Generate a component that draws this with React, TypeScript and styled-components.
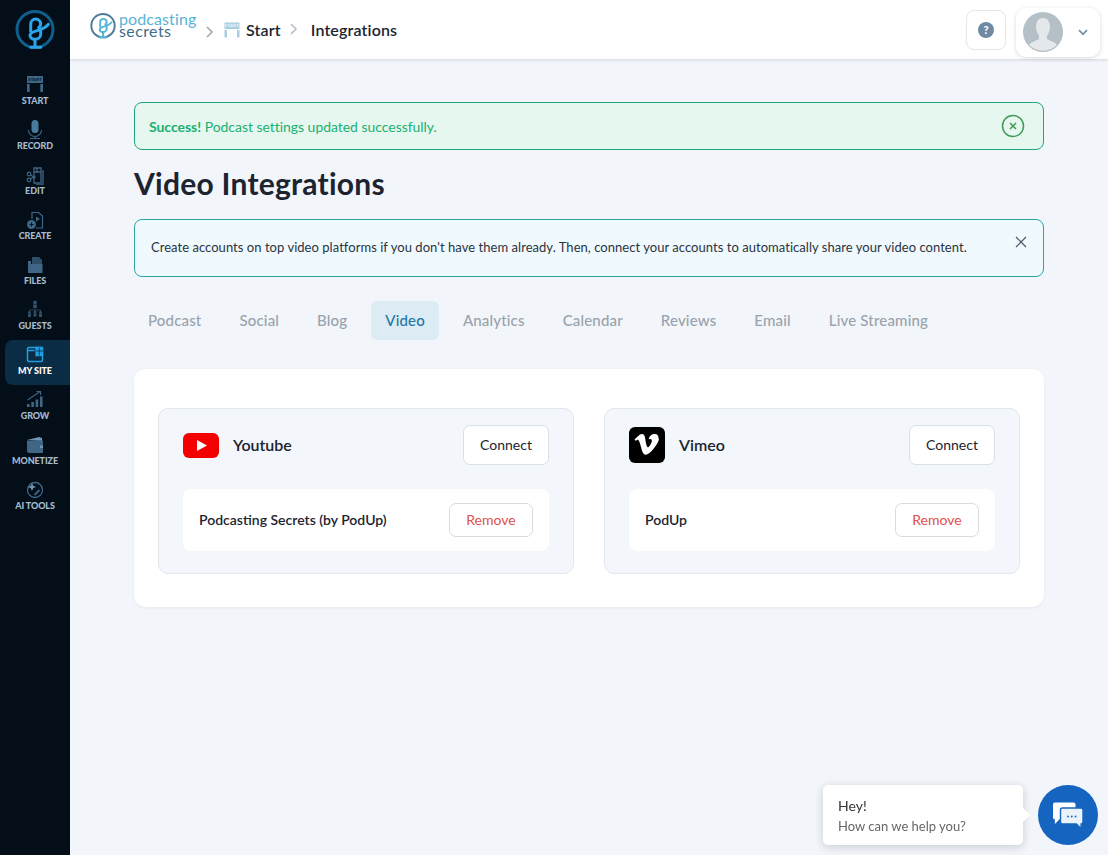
import React from "react";
import styled, { createGlobalStyle } from "styled-components";

const GlobalStyle = createGlobalStyle`
  html, body {
    margin: 0;
    padding: 0;
    height: 100%;
    background: #f2f5f9;
    font-family: "Lato", "Noto Sans", sans-serif;
    color: #1b2430;
  }
  * {
    box-sizing: border-box;
  }
`;

const Shell = styled.div`
  display: flex;
  height: 855px;
  overflow: hidden;
`;

const Sidebar = styled.aside`
  width: 70px;
  flex: none;
  background: #030e18;
  display: flex;
  flex-direction: column;
`;

const SideLogo = styled.div`
  height: 70px;
  padding-top: 10px;
  display: flex;
  justify-content: center;
`;

const NavItem = styled.div<{ $active?: boolean }>`
  height: 45px;
  margin-left: 5px;
  padding: 5px 5px 0 0;
  display: flex;
  flex-direction: column;
  align-items: center;
  border-radius: 8px 0 0 8px;
  background: ${(p) => (p.$active ? "#0b2c45" : "transparent")};
  color: ${(p) => (p.$active ? "#1f9fe0" : "#3f6684")};
`;

const NavIcon = styled.svg`
  width: 20px;
  height: 20px;
  display: block;
`;

const NavLabel = styled.span<{ $active?: boolean }>`
  font-family: "Lato", sans-serif;
  font-size: 9px;
  line-height: 11px;
  font-weight: 900;
  white-space: nowrap;
  letter-spacing: -0.1px;
  color: ${(p) => (p.$active ? "#ffffff" : "#a5bccd")};
`;

const Main = styled.div`
  flex: 1;
  display: flex;
  flex-direction: column;
  min-width: 0;
`;

const Header = styled.header`
  height: 59px;
  flex: none;
  background: #ffffff;
  box-shadow: 0 1px 3px rgba(30, 50, 80, 0.14);
  display: flex;
  align-items: center;
  padding: 0 8px 0 20px;
`;

const Brand = styled.div`
  display: flex;
  align-items: center;
  gap: 3px;
  margin-bottom: 7px;
`;

const Crumbs = styled.nav`
  display: flex;
  align-items: center;
  margin-left: 9px;
  font-size: 16px;
  font-weight: 600;
  letter-spacing: 0.15px;
  color: #1b2430;
`;

const CrumbChevron = styled.svg<{ $dy: number; $gapLeft: number; $gapRight: number }>`
  width: 8px;
  height: 12px;
  margin: 0 ${(p) => p.$gapRight}px 0 ${(p) => p.$gapLeft}px;
  transform: translateY(${(p) => p.$dy}px);
`;

const CrumbIcon = styled.svg`
  width: 16px;
  height: 16px;
  margin-right: 6px;
`;

const Spacer = styled.div`
  flex: 1;
`;

const HelpButton = styled.button`
  width: 40px;
  height: 40px;
  border: 1px solid #e2e7ed;
  border-radius: 8px;
  background: #fff;
  display: flex;
  align-items: center;
  justify-content: center;
  padding: 0;
`;

const ProfileButton = styled.div`
  width: 84px;
  height: 49px;
  margin-left: 10px;
  margin-top: 5px;
  border-radius: 10px;
  background: #fff;
  box-shadow: 0 1px 4px rgba(30, 50, 80, 0.18);
  display: flex;
  align-items: center;
  padding-left: 7px;
  gap: 15px;
`;

const Content = styled.main`
  flex: 1;
  padding: 43px 64px 0;
  display: flex;
  flex-direction: column;
`;

const SuccessAlert = styled.div`
  height: 48px;
  border: 1px solid #22a57c;
  border-radius: 8px;
  background: #e6f7f0;
  color: #1cb072;
  font-size: 14px;
  letter-spacing: -0.04px;
  display: flex;
  align-items: center;
  justify-content: space-between;
  padding: 0 18px 0 14px;
  b {
    font-weight: 700;
  }
`;

const Title = styled.h1`
  margin: 13px 0 16px;
  font-size: 30px;
  line-height: 40px;
  font-weight: 700;
  letter-spacing: 0.25px;
  color: #1b2430;
`;

const InfoAlert = styled.div`
  height: 58px;
  border: 1px solid #2aa5a5;
  border-radius: 8px;
  background: #f0f9fd;
  font-size: 13px;
  letter-spacing: 0.04px;
  color: #2a3440;
  display: flex;
  align-items: center;
  justify-content: space-between;
  padding: 0 16px;
`;

const InfoText = styled.span`
  margin-bottom: 2px;
`;

const InfoClose = styled.svg`
  width: 12px;
  height: 12px;
  margin-bottom: 12px;
`;

const Tabs = styled.div`
  display: flex;
  margin-top: 24px;
`;

const Tab = styled.div<{ $active?: boolean }>`
  height: 39px;
  padding: 0 14px 2px;
  margin-right: 10px;
  display: flex;
  align-items: center;
  font-size: 15px;
  letter-spacing: 0.17px;
  border-radius: 6px;
  font-weight: 500;
  color: ${(p) => (p.$active ? "#1f78a8" : "#98a3ad")};
  background: ${(p) => (p.$active ? "#dcebf4" : "transparent")};
`;

const Panel = styled.section`
  margin-top: 29px;
  height: 238px;
  background: #fff;
  border-radius: 12px;
  box-shadow: 0 1px 3px rgba(30, 50, 80, 0.06);
  padding: 39px 24px 0;
  display: grid;
  grid-template-columns: 416px 416px;
  column-gap: 30px;
  align-items: start;
`;

const IntegrationCard = styled.div`
  height: 166px;
  background: #f3f6fa;
  border: 1px solid #e1e7ed;
  border-radius: 10px;
  padding: 16px 24px 0;
`;

const CardHead = styled.div`
  display: flex;
  align-items: center;
  height: 40px;
`;

const CardName = styled.span`
  margin: 0 0 2px 14px;
  font-size: 16px;
  font-weight: 600;
  flex: 1;
`;

const ConnectButton = styled.button`
  width: 86px;
  height: 40px;
  background: #fff;
  border: 1px solid #d9dfe6;
  border-radius: 7px;
  font: inherit;
  font-size: 14px;
  color: #1b2430;
  padding: 0 0 2px;
`;

const AccountRow = styled.div`
  margin-top: 24px;
  height: 62px;
  background: #fff;
  border-radius: 8px;
  display: flex;
  align-items: center;
  justify-content: space-between;
  padding: 0 16px;
  font-size: 14px;
  font-weight: 600;
`;

const AccountName = styled.span`
  margin-bottom: 2px;
`;

const RemoveButton = styled.button`
  width: 84px;
  height: 34px;
  background: #fff;
  border: 1px solid #d5dce2;
  border-radius: 7px;
  font: inherit;
  font-size: 14px;
  font-weight: 400;
  color: #e0504a;
  padding: 0 0 2px;
`;

const ChatWidget = styled.div`
  position: fixed;
  right: 10px;
  bottom: 10px;
  display: flex;
  align-items: center;
  gap: 15px;
`;

const ChatBubble = styled.div`
  position: relative;
  width: 200px;
  height: 60px;
  background: #fff;
  border-radius: 5px;
  box-shadow: 0 2px 8px rgba(30, 50, 80, 0.2);
  padding: 12px 15px;
  &::after {
    content: "";
    position: absolute;
    right: -5px;
    top: 25px;
    width: 10px;
    height: 10px;
    background: #fff;
    transform: rotate(45deg);
  }
`;

const ChatHey = styled.div`
  font-size: 14px;
  line-height: 18px;
  color: #333;
`;

const ChatHelp = styled.div`
  font-size: 13px;
  line-height: 22px;
  color: #666;
`;

const ChatButton = styled.div`
  width: 60px;
  height: 60px;
  border-radius: 50%;
  background: #1565c0;
  display: flex;
  align-items: center;
  justify-content: center;
`;

const LogoMark: React.FC<{ size: number; ring: string; stroke: string; weight: number }> = ({
  size,
  ring,
  stroke,
  weight,
}) => (
  <svg width={size} height={size} viewBox="0 0 40 40" fill="none">
    <circle cx="20" cy="19.5" r="18" stroke={ring} strokeWidth={weight} />
    <g stroke={stroke} strokeWidth={weight} strokeLinecap="round" strokeLinejoin="round">
      <path d="M15.7 21V14a5 5 0 0 1 10 0c0 1.5-.8 2.7-2 3.5" />
      <path d="M33.3 14.3c-2 3-6 4.5-10 6-4 1.3-8.3 2-8.3 5 0 2.5 2.5 4 5 4s5.7-1.5 5.7-5v-2.5" />
      <path d="M20 29.5V37M15.7 37.3h10" />
    </g>
  </svg>
);

const navItems: { label: string; icon: React.ReactNode; active?: boolean }[] = [
  {
    label: "START",
    icon: (
      <>
        <rect x="2" y="1" width="16" height="7" fill="currentColor" />
        <text x="10" y="6.2" textAnchor="middle" fontSize="4.5" fontWeight="900" fill="#0a1c2b" fontFamily="Lato, sans-serif">
          START
        </text>
        <rect x="2" y="9" width="2.7" height="8" fill="currentColor" />
        <rect x="15.3" y="9" width="2.7" height="8" fill="currentColor" />
      </>
    ),
  },
  {
    label: "RECORD",
    icon: (
      <>
        <rect x="6.5" y="0" width="7" height="13" rx="3.5" fill="#4a7a9c" />
        <path d="M3.5 10a6.5 6.5 0 0 0 13 0M10 16.5V18.5M5 18.5h10" stroke="currentColor" strokeWidth="1.1" fill="none" />
      </>
    ),
  },
  {
    label: "EDIT",
    icon: (
      <>
        <path d="M9 3h7v15H9V3zM9 7h7M12 3v4M18 5v15h-7" stroke="currentColor" strokeWidth="1.3" fill="none" />
        <circle cx="4" cy="9" r="1.8" stroke="currentColor" strokeWidth="1.2" fill="none" />
        <circle cx="4" cy="15" r="1.8" stroke="currentColor" strokeWidth="1.2" fill="none" />
        <path d="M5.5 10l5 3M5.5 14l5-3" stroke="currentColor" strokeWidth="1.2" />
      </>
    ),
  },
  {
    label: "CREATE",
    icon: (
      <>
        <path d="M7 9V2.5h6.5L17.5 6v12H11" stroke="currentColor" strokeWidth="1.2" fill="none" />
        <circle cx="6.5" cy="14.5" r="4.5" fill="currentColor" />
        <path d="M6.5 12.5v4M4.5 14.5h4" stroke="#030e18" strokeWidth="1" />
        <path d="M11 6.5l4 2.5-4 2.5z" fill="currentColor" />
      </>
    ),
  },
  {
    label: "FILES",
    icon: (
      <>
        <path d="M7 2h7l3 3v4H7z" fill="#2e4e68" />
        <path d="M3 6h3v3h11.5V18H3z" fill="currentColor" />
      </>
    ),
  },
  {
    label: "GUESTS",
    icon: (
      <g opacity="0.75">
        <circle cx="10" cy="2.5" r="2" fill="currentColor" />
        <rect x="8" y="4.5" width="4" height="3.5" rx="1" fill="currentColor" />
        <path d="M10 8v2M4.5 12v-2h11v2" stroke="currentColor" strokeWidth="0.8" fill="none" />
        <circle cx="4.5" cy="12.5" r="1.5" fill="currentColor" />
        <circle cx="10" cy="12" r="1.5" fill="currentColor" />
        <circle cx="15.5" cy="12.5" r="1.5" fill="currentColor" />
        <rect x="3" y="14" width="3" height="3" fill="currentColor" />
        <rect x="8.5" y="13.5" width="3" height="3" fill="currentColor" />
        <rect x="14" y="14" width="3" height="3" fill="currentColor" />
      </g>
    ),
  },
  {
    label: "MY SITE",
    active: true,
    icon: (
      <>
        <rect x="2.5" y="2.5" width="15" height="14" rx="1.5" stroke="currentColor" strokeWidth="1.5" fill="none" />
        <path d="M2.5 5.5h7M11 2.5h6.5v8H11z" fill="currentColor" stroke="currentColor" strokeWidth="1.3" />
        <path d="M11 6h7M14.3 2.5v8" stroke="#0b2c45" strokeWidth="0.8" />
      </>
    ),
  },
  {
    label: "GROW",
    icon: (
      <>
        <path d="M2.5 10L14.5 2M11.5 1.5h4v3.5" stroke="currentColor" strokeWidth="1.1" fill="none" />
        <rect x="2" y="14" width="2.6" height="3" fill="currentColor" />
        <rect x="6.3" y="12" width="2.6" height="5" fill="currentColor" />
        <rect x="10.6" y="9.5" width="2.6" height="7.5" fill="currentColor" />
        <rect x="15" y="6.5" width="2.6" height="10.5" fill="currentColor" />
      </>
    ),
  },
  {
    label: "MONETIZE",
    icon: (
      <>
        <path d="M2 5l12-3 3 1v3z" fill="#6f95b0" />
        <path d="M2 5.5h16V18H4.5A2.5 2.5 0 0 1 2 15.5z" fill="currentColor" />
        <path d="M15 10.5h3V13h-3z" fill="#6f95b0" />
      </>
    ),
  },
  {
    label: "AI TOOLS",
    icon: (
      <>
        <circle cx="10" cy="10" r="7.5" stroke="currentColor" strokeWidth="1.3" fill="none" />
        <path d="M7 3l1.2 2.8L11 7 8.2 8.2 7 11 5.8 8.2 3 7l2.8-1.2z" fill="#6f95b0" />
        <path d="M9.5 15l5-5" stroke="currentColor" strokeWidth="1.8" />
      </>
    ),
  },
];

const tabs = ["Podcast", "Social", "Blog", "Video", "Analytics", "Calendar", "Reviews", "Email", "Live Streaming"];

const App: React.FC = () => (
  <Shell>
    <GlobalStyle />
    <Sidebar>
      <SideLogo>
        <LogoMark size={40} ring="#0f5f8c" stroke="#2aa5ea" weight={3} />
      </SideLogo>
      {navItems.map((item) => (
        <NavItem key={item.label} $active={item.active}>
          <NavIcon viewBox="0 0 20 20">{item.icon}</NavIcon>
          <NavLabel $active={item.active}>{item.label}</NavLabel>
        </NavItem>
      ))}
    </Sidebar>
    <Main>
      <Header>
        <Brand>
          <LogoMark size={26} ring="#4d7c9b" stroke="#58b4d6" weight={3} />
          <svg width="80" height="36" viewBox="0 0 80 36" fontFamily="Lato, sans-serif" fontSize="16">
            <text x="0" y="17" fill="#58b4d6" letterSpacing="0.1">
              podcasting
            </text>
            <text x="0" y="29" fill="#3f6d8c" letterSpacing="0.4">
              secrets
            </text>
          </svg>
        </Brand>
        <Crumbs>
          <CrumbChevron viewBox="0 0 8 12" fill="none" $dy={2} $gapLeft={-2} $gapRight={10}>
            <path d="M1 1l5 5-5 5" stroke="#9aa5ae" strokeWidth="1.5" />
          </CrumbChevron>
          <CrumbIcon viewBox="0 0 16 16">
            <rect x="0.5" y="0.5" width="15" height="6.5" fill="#a9cfe2" />
            <text x="8" y="5.3" textAnchor="middle" fontSize="4.5" fontWeight="900" fill="#e6f2f8" fontFamily="Lato, sans-serif">
              START
            </text>
            <rect x="0.5" y="8" width="2.5" height="7.5" fill="#a9cfe2" />
            <rect x="13" y="8" width="2.5" height="7.5" fill="#a9cfe2" />
          </CrumbIcon>
          <span>Start</span>
          <CrumbChevron viewBox="0 0 8 12" fill="none" $dy={-1} $gapLeft={9} $gapRight={13}>
            <path d="M1 1l5 5-5 5" stroke="#b4bdc5" strokeWidth="1.5" />
          </CrumbChevron>
          <span>Integrations</span>
        </Crumbs>
        <Spacer />
        <HelpButton>
          <svg width="16" height="16" viewBox="0 0 16 16">
            <circle cx="8" cy="8" r="8" fill="#6f8aa5" />
            <text x="8" y="12" textAnchor="middle" fontSize="11" fontWeight="900" fill="#fff" fontFamily="Lato, sans-serif">
              ?
            </text>
          </svg>
        </HelpButton>
        <ProfileButton>
          <svg width="40" height="40" viewBox="0 0 40 40">
            <circle cx="20" cy="20" r="20" fill="#b4bfc6" />
            <path
              d="M20 6c-5 0-7 4-7 9 0 4 2 7 3 9v3c-3 2-8 3-10 6a20 20 0 0 0 28 0c-2-3-7-4-10-6v-3c1-2 3-5 3-9 0-5-2-9-7-9z"
              fill="#e4e8ea"
            />
          </svg>
          <svg width="10" height="7" viewBox="0 0 10 7" fill="none">
            <path d="M1 1.2l4 4 4-4" stroke="#7d94a8" strokeWidth="1.8" />
          </svg>
        </ProfileButton>
      </Header>
      <Content>
        <SuccessAlert>
          <span>
            <b>Success!</b> Podcast settings updated successfully.
          </span>
          <svg width="24" height="24" viewBox="0 0 24 24" fill="none">
            <circle cx="12" cy="12" r="10.5" stroke="#3f9a55" strokeWidth="1.5" />
            <path d="M9 9l6 6M15 9l-6 6" stroke="#3f9a55" strokeWidth="1.5" />
          </svg>
        </SuccessAlert>
        <Title>Video Integrations</Title>
        <InfoAlert>
          <InfoText>
            Create accounts on top video platforms if you don't have them already. Then, connect your accounts to
            automatically share your video content.
          </InfoText>
          <InfoClose viewBox="0 0 12 12" fill="none">
            <path d="M1 1l10 10M11 1L1 11" stroke="#4a5866" strokeWidth="1.2" />
          </InfoClose>
        </InfoAlert>
        <Tabs>
          {tabs.map((t) => (
            <Tab key={t} $active={t === "Video"}>
              {t}
            </Tab>
          ))}
        </Tabs>
        <Panel>
          <IntegrationCard>
            <CardHead>
              <svg width="36" height="25" viewBox="0 0 36 25">
                <rect width="36" height="25" rx="6" fill="#f40000" />
                <path d="M14 7l10 5.5L14 18z" fill="#fff" />
              </svg>
              <CardName>Youtube</CardName>
              <ConnectButton>Connect</ConnectButton>
            </CardHead>
            <AccountRow>
              <AccountName>Podcasting Secrets (by PodUp)</AccountName>
              <RemoveButton>Remove</RemoveButton>
            </AccountRow>
          </IntegrationCard>
          <IntegrationCard>
            <CardHead>
              <svg width="36" height="36" viewBox="0 0 36 36">
                <rect width="36" height="36" rx="6" fill="#000" />
                <path
                  d="M30 11.5c-.1 2.4-1.8 5.7-5 9.8-3.3 4.3-6.1 6.4-8.4 6.4-1.4 0-2.6-1.3-3.6-3.9l-2-7.2c-.7-2.6-1.5-3.9-2.4-3.9-.2 0-.8.4-1.9 1.1L5.5 12.4c1.2-1 2.4-2.1 3.5-3.1 1.6-1.4 2.8-2.1 3.6-2.2 1.9-.2 3.1 1.1 3.5 3.9.5 3 .8 4.9 1 5.6.5 2.5 1.1 3.7 1.8 3.7.5 0 1.3-.8 2.3-2.4 1-1.6 1.6-2.8 1.6-3.7.1-1.4-.4-2.1-1.6-2.1-.6 0-1.1.1-1.7.4 1.1-3.7 3.3-5.5 6.5-5.4 2.4.1 3.6 1.6 3.5 4.4z"
                  fill="#fff"
                />
              </svg>
              <CardName>Vimeo</CardName>
              <ConnectButton>Connect</ConnectButton>
            </CardHead>
            <AccountRow>
              <AccountName>PodUp</AccountName>
              <RemoveButton>Remove</RemoveButton>
            </AccountRow>
          </IntegrationCard>
        </Panel>
      </Content>
    </Main>
    <ChatWidget>
      <ChatBubble>
        <ChatHey>Hey!</ChatHey>
        <ChatHelp>How can we help you?</ChatHelp>
      </ChatBubble>
      <ChatButton>
        <svg width="30" height="27" viewBox="0 0 32 28">
          <path d="M2 0h20a2 2 0 0 1 2 2v14a2 2 0 0 1-2 2H7l-5 5V18a2 2 0 0 1-2-2V2a2 2 0 0 1 2-2z" fill="#fff" />
          <path
            d="M10 6h20a2 2 0 0 1 2 2v13a2 2 0 0 1-2 2v5l-5-5H10a2 2 0 0 1-2-2V8a2 2 0 0 1 2-2z"
            fill="#eaf2fb"
            stroke="#1565c0"
            strokeWidth="1.5"
          />
          <circle cx="16" cy="15" r="1" fill="#1565c0" />
          <circle cx="20" cy="15" r="1" fill="#1565c0" />
          <circle cx="24" cy="15" r="1" fill="#1565c0" />
        </svg>
      </ChatButton>
    </ChatWidget>
  </Shell>
);

export default App;
